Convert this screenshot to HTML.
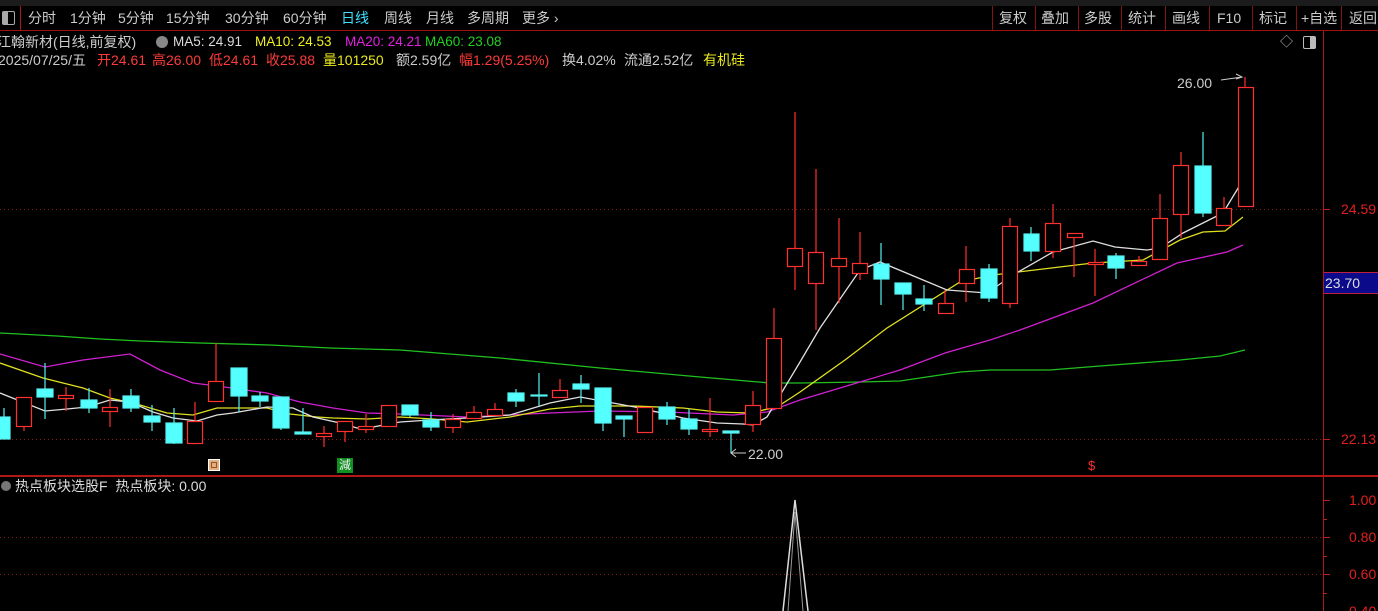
<!DOCTYPE html>
<html><head><meta charset="utf-8"><style>
html,body{margin:0;padding:0;background:#000;width:1378px;height:611px;overflow:hidden}
body{font-family:"Liberation Sans","Noto Sans CJK SC",sans-serif;position:relative}
.t{position:absolute;white-space:nowrap;font-size:14px;line-height:16px}
.m{font-size:13.5px}
</style></head><body>
<div style="position:absolute;left:0;top:0;width:1378px;height:6px;background:#1c1c1c"></div>
<div style="position:absolute;left:0;top:30px;width:1378px;height:1px;background:#a01010"></div>
<div style="position:absolute;left:1323px;top:31px;width:1px;height:580px;background:#b01818"></div>
<div style="position:absolute;left:0;top:475px;width:1378px;height:2px;background:#b01818"></div>
<!-- toolbar -->
<div style="position:absolute;left:2px;top:11px;width:11px;height:12px;border:1px solid #aaa;border-radius:2px"><div style="width:5px;height:12px;background:#aaa"></div></div>
<div style="position:absolute;left:20px;top:6px;width:1px;height:24px;background:#b01818"></div>
<div class="t" style="left:28px;top:10px;color:#ccc">分时</div>
<div class="t" style="left:70px;top:10px;color:#ccc">1分钟</div>
<div class="t" style="left:118px;top:10px;color:#ccc">5分钟</div>
<div class="t" style="left:166px;top:10px;color:#ccc">15分钟</div>
<div class="t" style="left:225px;top:10px;color:#ccc">30分钟</div>
<div class="t" style="left:283px;top:10px;color:#ccc">60分钟</div>
<div class="t" style="left:341px;top:10px;color:#3ee0ff">日线</div>
<div class="t" style="left:384px;top:10px;color:#ccc">周线</div>
<div class="t" style="left:426px;top:10px;color:#ccc">月线</div>
<div class="t" style="left:467px;top:10px;color:#ccc">多周期</div>
<div class="t" style="left:522px;top:10px;color:#ccc">更多 ›</div>
<div class="t" style="left:999px;top:10px;color:#ccc">复权</div>
<div class="t" style="left:1041px;top:10px;color:#ccc">叠加</div>
<div class="t" style="left:1084px;top:10px;color:#ccc">多股</div>
<div class="t" style="left:1128px;top:10px;color:#ccc">统计</div>
<div class="t" style="left:1172px;top:10px;color:#ccc">画线</div>
<div class="t" style="left:1217px;top:10px;color:#ccc">F10</div>
<div class="t" style="left:1259px;top:10px;color:#ccc">标记</div>
<div class="t" style="left:1301px;top:10px;color:#ccc">+自选</div>
<div class="t" style="left:1349px;top:10px;color:#ccc">返回</div>
<svg style="position:absolute;left:0;top:6px" width="1378" height="24">
<g stroke="#8a1010" stroke-width="1">
<line x1="992.5" y1="0" x2="992.5" y2="24"/><line x1="1035.5" y1="0" x2="1035.5" y2="24"/><line x1="1078.5" y1="0" x2="1078.5" y2="24"/><line x1="1121.5" y1="0" x2="1121.5" y2="24"/><line x1="1165.5" y1="0" x2="1165.5" y2="24"/><line x1="1209.5" y1="0" x2="1209.5" y2="24"/><line x1="1252.5" y1="0" x2="1252.5" y2="24"/><line x1="1296.5" y1="0" x2="1296.5" y2="24"/><line x1="1341.5" y1="0" x2="1341.5" y2="24"/></g></svg>
<!-- info -->
<div class="t" style="left:-3px;top:34px;color:#ccc">江翰新材(日线,前复权)</div>
<div style="position:absolute;left:156px;top:36px;width:12px;height:12px;border-radius:6px;background:#888"></div>
<div class="t m" style="left:173px;top:34px;color:#ddd">MA5: 24.91</div>
<div class="t m" style="left:255px;top:34px;color:#f0f020">MA10: 24.53</div>
<div class="t m" style="left:345px;top:34px;color:#e020e0">MA20: 24.21</div>
<div class="t m" style="left:425px;top:34px;color:#20d020">MA60: 23.08</div>
<div class="t" style="left:-2px;top:52px;color:#ccc">2025/07/25/五</div>
<div class="t" style="left:97px;top:52px;color:#ff3a3a">开24.61</div>
<div class="t" style="left:152px;top:52px;color:#ff3a3a">高26.00</div>
<div class="t" style="left:209px;top:52px;color:#ff3a3a">低24.61</div>
<div class="t" style="left:266px;top:52px;color:#ff3a3a">收25.88</div>
<div class="t" style="left:323px;top:52px;color:#e8e820">量101250</div>
<div class="t" style="left:396px;top:52px;color:#ccc">额2.59亿</div>
<div class="t" style="left:459px;top:52px;color:#ff3a3a">幅1.29(5.25%)</div>
<div class="t" style="left:562px;top:52px;color:#ccc">换4.02%</div>
<div class="t" style="left:624px;top:52px;color:#ccc">流通2.52亿</div>
<div class="t" style="left:703px;top:52px;color:#e8e820">有机硅</div>
<div class="t" style="left:1280px;top:34px;color:#bbb;font-size:13px">◇</div>
<div style="position:absolute;left:1303px;top:36px;width:11px;height:11px;border:1px solid #bbb;border-radius:2px"><div style="margin-left:6px;width:5px;height:11px;background:#bbb"></div></div>
<!-- axis labels -->
<div class="t" style="left:1341px;top:201px;color:#e02020">24.59</div>
<div class="t" style="left:1341px;top:431px;color:#e02020">22.13</div>
<div style="position:absolute;left:1324px;top:272px;width:54px;height:20px;background:#0a0a8a;border-top:1px solid #c02040;border-bottom:1px solid #c02040"></div>
<div class="t" style="left:1325px;top:275px;color:#ddd">23.70</div>
<div class="t" style="left:1349px;top:492px;color:#e02020">1.00</div>
<div class="t" style="left:1349px;top:529px;color:#e02020">0.80</div>
<div class="t" style="left:1349px;top:566px;color:#e02020">0.60</div>
<div class="t" style="left:1349px;top:603px;color:#e02020">0.40</div>
<div class="t" style="left:1177px;top:75px;color:#ccc">26.00</div>
<div class="t" style="left:748px;top:446px;color:#ccc">22.00</div>
<div class="t" style="left:15px;top:478px;color:#ddd">热点板块选股F &nbsp;热点板块: 0.00</div>
<div style="position:absolute;left:1px;top:481px;width:10px;height:10px;border-radius:5px;background:#777"></div>
<div style="position:absolute;left:208px;top:459px;width:12px;height:12px;background:#e0b080;border:1px solid #fff;box-sizing:border-box"><div style="margin:2px;width:6px;height:6px;border:1px solid #a05020;box-sizing:border-box"></div></div>
<div style="position:absolute;left:337px;top:458px;width:16px;height:15px;background:#109020;color:#eee;font-size:12px;line-height:15px;text-align:center">減</div>
<div class="t" style="left:1088px;top:458px;color:#ff3030;font-size:13px">$</div>
<svg style="position:absolute;left:0;top:0" width="1378" height="611">
<g stroke="#8a1818" stroke-width="1" stroke-dasharray="1,3">
<line x1="0" y1="209.5" x2="1323" y2="209.5"/><line x1="0" y1="439.5" x2="1323" y2="439.5"/>
<line x1="0" y1="537.5" x2="1323" y2="537.5"/><line x1="0" y1="574.5" x2="1323" y2="574.5"/></g>
<g stroke="#c02020"><line x1="1323" y1="209.5" x2="1330" y2="209.5"/><line x1="1323" y1="439.5" x2="1330" y2="439.5"/><line x1="1323" y1="500.5" x2="1330" y2="500.5"/><line x1="1323" y1="537.5" x2="1330" y2="537.5"/><line x1="1323" y1="574.5" x2="1330" y2="574.5"/><line x1="1323" y1="519.5" x2="1327" y2="519.5"/><line x1="1323" y1="556.5" x2="1327" y2="556.5"/><line x1="1323" y1="593.5" x2="1327" y2="593.5"/></g>
<g fill="none" stroke-width="1.3">
<polyline stroke="#20c020" points="0,333 57,336 100,339 140,341 200,343 270,345 330,348 400,350 500,358 600,368 700,377 770,383 800,383 860,382 900,381 960,372 990,370 1050,370 1100,366 1180,360 1220,356 1245,350"/>
<polyline stroke="#d020d0" points="0,354 45,367 83,360 130,354 160,370 193,383 217,386 267,393 300,402 333,408 367,413 400,414 467,417 550,413 600,411 667,412 733,415 767,412 800,400 850,385 900,370 945,353 990,340 1020,330 1093,303 1177,263 1227,252 1243,245"/>
<polyline stroke="#e0e020" points="0,363 43,378 83,388 110,398 140,405 167,413 193,415 217,408 267,408 290,414 317,417 333,418 367,419 400,417 433,419 467,422 510,417 550,409 580,406 633,406 683,408 717,412 750,413 777,407 800,392 845,360 887,328 960,282 993,275 1093,263 1143,260 1180,240 1203,232 1225,231 1243,217"/>
<polyline stroke="#e0e0e0" points="0,393 45,411 67,409 87,407 110,400 130,402 153,412 173,418 197,421 217,415 233,413 267,407 293,408 313,417 340,423 357,428 373,427 400,422 430,420 467,418 510,415 550,403 580,397 613,403 640,408 683,418 717,423 743,424 753,425 767,417 800,362 820,328 860,270 880,262 947,290 987,293 1013,275 1053,252 1093,241 1115,247 1147,250 1160,248 1183,233 1223,213 1243,180"/>
</g>
<g stroke-width="1.2">
<g stroke="#54f0f0" fill="#54ffff">
<line x1="4" y1="408" x2="4" y2="439"/><rect x="-4" y="417" width="14" height="22"/>
<line x1="45" y1="363" x2="45" y2="419"/><rect x="37" y="389" width="16" height="8"/>
<line x1="89" y1="388" x2="89" y2="413"/><rect x="81" y="400" width="16" height="8"/>
<line x1="131" y1="389" x2="131" y2="412"/><rect x="123" y="396" width="16" height="12"/>
<line x1="152" y1="405" x2="152" y2="431"/><rect x="144" y="416" width="16" height="6"/>
<line x1="174" y1="408" x2="174" y2="444"/><rect x="166" y="423" width="16" height="20"/>
<line x1="239" y1="368" x2="239" y2="412"/><rect x="231" y="368" width="16" height="28"/>
<line x1="260" y1="392" x2="260" y2="407"/><rect x="252" y="396" width="16" height="5"/>
<line x1="281" y1="397" x2="281" y2="430"/><rect x="273" y="397" width="16" height="31"/>
<line x1="303" y1="408" x2="303" y2="434"/><rect x="295" y="432" width="16" height="2"/>
<line x1="410" y1="405" x2="410" y2="417"/><rect x="402" y="405" width="16" height="10"/>
<line x1="431" y1="412" x2="431" y2="431"/><rect x="423" y="420" width="16" height="7"/>
<line x1="516" y1="389" x2="516" y2="407"/><rect x="508" y="393" width="16" height="8"/>
<line x1="539" y1="373" x2="539" y2="406"/><rect x="531" y="395" width="16" height="1"/>
<line x1="581" y1="375" x2="581" y2="403"/><rect x="573" y="384" width="16" height="5"/>
<line x1="603" y1="388" x2="603" y2="431"/><rect x="595" y="388" width="16" height="35"/>
<line x1="624" y1="416" x2="624" y2="437"/><rect x="616" y="416" width="16" height="3"/>
<line x1="667" y1="402" x2="667" y2="425"/><rect x="659" y="407" width="16" height="12"/>
<line x1="689" y1="409" x2="689" y2="435"/><rect x="681" y="419" width="16" height="10"/>
<line x1="731" y1="431" x2="731" y2="453"/><rect x="723" y="431" width="16" height="2"/>
<line x1="881" y1="243" x2="881" y2="305"/><rect x="874" y="264" width="15" height="15"/>
<line x1="903" y1="283" x2="903" y2="310"/><rect x="895" y="283" width="16" height="11"/>
<line x1="924" y1="285" x2="924" y2="311"/><rect x="916" y="299" width="16" height="5"/>
<line x1="989" y1="264" x2="989" y2="302"/><rect x="981" y="269" width="16" height="29"/>
<line x1="1031" y1="227" x2="1031" y2="261"/><rect x="1024" y="234" width="15" height="17"/>
<line x1="1116" y1="253" x2="1116" y2="279"/><rect x="1108" y="256" width="16" height="12"/>
<line x1="1203" y1="132" x2="1203" y2="217"/><rect x="1195" y="166" width="16" height="47"/>
</g>
<g stroke="#ff3030" fill="#000">
<line x1="24" y1="397" x2="24" y2="431"/><rect x="16.5" y="397.5" width="15" height="29"/>
<line x1="66" y1="387" x2="66" y2="411"/><rect x="58.5" y="395.5" width="15" height="3"/>
<line x1="110" y1="389" x2="110" y2="427"/><rect x="102.5" y="407.5" width="15" height="4"/>
<line x1="195" y1="402" x2="195" y2="444"/><rect x="187.5" y="421.5" width="15" height="22"/>
<line x1="216" y1="343" x2="216" y2="402"/><rect x="208.5" y="381.5" width="15" height="20"/>
<line x1="324" y1="426" x2="324" y2="447"/><rect x="316.5" y="433.5" width="15" height="3"/>
<line x1="345" y1="421" x2="345" y2="442"/><rect x="337.5" y="421.5" width="15" height="10"/>
<line x1="366" y1="414" x2="366" y2="433"/><rect x="358.5" y="426.5" width="15" height="3"/>
<line x1="389" y1="405" x2="389" y2="427"/><rect x="381.5" y="405.5" width="15" height="21"/>
<line x1="453" y1="414" x2="453" y2="433"/><rect x="445.5" y="419.5" width="15" height="8"/>
<line x1="474" y1="406" x2="474" y2="419"/><rect x="466.5" y="412.5" width="15" height="6"/>
<line x1="495" y1="403" x2="495" y2="416"/><rect x="487.5" y="409.5" width="15" height="6"/>
<line x1="560" y1="379" x2="560" y2="398"/><rect x="552.5" y="390.5" width="15" height="7"/>
<line x1="645" y1="407" x2="645" y2="433"/><rect x="637.5" y="407.5" width="15" height="25"/>
<line x1="710" y1="398" x2="710" y2="437"/><rect x="702.5" y="429.5" width="15" height="2"/>
<line x1="753" y1="391" x2="753" y2="432"/><rect x="745.5" y="405.5" width="15" height="19"/>
<line x1="774" y1="308" x2="774" y2="409"/><rect x="766.5" y="338.5" width="15" height="70"/>
<line x1="795" y1="112" x2="795" y2="290"/><rect x="787.5" y="248.5" width="15" height="18"/>
<line x1="816" y1="169" x2="816" y2="330"/><rect x="808.5" y="252.5" width="15" height="31"/>
<line x1="839" y1="218" x2="839" y2="303"/><rect x="831.5" y="258.5" width="15" height="8"/>
<line x1="860" y1="232" x2="860" y2="280"/><rect x="852.5" y="263.5" width="15" height="10"/>
<line x1="945" y1="290" x2="945" y2="314"/><rect x="938.5" y="303.5" width="15" height="10"/>
<line x1="966" y1="246" x2="966" y2="302"/><rect x="959.5" y="269.5" width="15" height="14"/>
<line x1="1010" y1="218" x2="1010" y2="308"/><rect x="1002.5" y="226.5" width="15" height="77"/>
<line x1="1053" y1="204" x2="1053" y2="258"/><rect x="1045.5" y="223.5" width="15" height="28"/>
<line x1="1074" y1="233" x2="1074" y2="277"/><rect x="1067.5" y="233.5" width="15" height="4"/>
<line x1="1095" y1="249" x2="1095" y2="296"/><rect x="1088.5" y="262.5" width="15" height="2"/>
<line x1="1139" y1="256" x2="1139" y2="266"/><rect x="1131.5" y="261.5" width="15" height="4"/>
<line x1="1160" y1="194" x2="1160" y2="260"/><rect x="1152.5" y="218.5" width="15" height="41"/>
<line x1="1181" y1="152" x2="1181" y2="238"/><rect x="1173.5" y="165.5" width="15" height="49"/>
<line x1="1224" y1="197" x2="1224" y2="226"/><rect x="1216.5" y="208.5" width="15" height="17"/>
<line x1="1245" y1="77" x2="1245" y2="207"/><rect x="1238.5" y="87.5" width="15" height="119"/>
</g>
</g>
<g stroke="#ccc" fill="none" stroke-width="1">
<polyline points="1221,80 1242,77"/><polyline points="1236,74 1242,77 1236,79"/>
<polyline points="731,453 746,453"/><polyline points="736,449 731,453 736,457"/>
</g>
<g stroke="#ddd" fill="none" stroke-width="1.5">
<polyline points="783,611 795,500 808,611"/>
<polyline points="788,611 795,512 803,611" stroke="#999" stroke-width="1"/>
</g>
</svg>
</body></html>
